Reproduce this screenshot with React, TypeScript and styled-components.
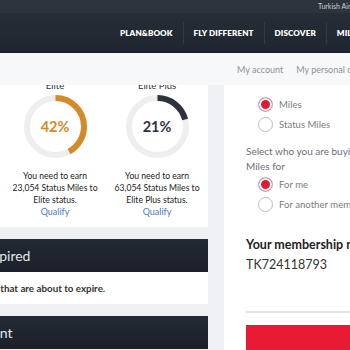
import { FC } from 'react';
import styled, { createGlobalStyle } from 'styled-components';

const GlobalStyle = createGlobalStyle`
    html, body {
        margin: 0;
        padding: 0;
        width: 350px;
        height: 350px;
        overflow: hidden;
        background: #eef0f3;
        font-family: Lato, "Noto Sans", Arial, sans-serif;
    }
`;

const Page = styled.div`
    width: 350px;
    height: 350px;
    display: flex;
    flex-direction: column;
    overflow: hidden;
`;

const TopStrip = styled.div`
    height: 13px;
    background: #2d343e;
    padding-left: 318px;
    color: #c9ced6;
    font-size: 7px;
    line-height: 12px;
    white-space: nowrap;
    overflow: hidden;
`;

const Nav = styled.nav`
    height: 39px;
    background: linear-gradient(#262d37, #20262f);
    display: flex;
    align-items: center;
    padding-left: 110px;
    white-space: nowrap;
    overflow: hidden;
    border-bottom: 1px solid #1a1f27;
`;

const NavItem = styled.a`
    color: #ffffff;
    font-weight: 800;
    font-size: 8.1px;
    letter-spacing: 0.1px;
    padding: 0 10px;
    line-height: 22px;
    border-right: 1px solid #333b46;
    &:last-child { border-right: none; }
`;

const Crumbs = styled.div`
    height: 32px;
    background: #f7f8f9;
    display: flex;
    align-items: center;
    gap: 13px;
    padding-left: 237px;
    white-space: nowrap;
    overflow: hidden;
    position: relative;
    z-index: 2;
`;

const Crumb = styled.span`
    color: #8f9297;
    font-size: 9px;
`;

const Main = styled.main`
    flex: 1;
    display: flex;
    gap: 16px;
    overflow: hidden;
`;

const LeftCol = styled.div`
    width: 208px;
    flex-shrink: 0;
    margin-top: -5px;
    display: flex;
    flex-direction: column;
    gap: 12px;
`;

const Card = styled.section`
    background: #ffffff;
    display: flex;
    padding: 0 0 9px 4px;
`;

const Stat = styled.div`
    width: 102px;
    display: flex;
    flex-direction: column;
    align-items: center;
    text-align: center;
`;

const StatLabel = styled.div`
    font-size: 9.5px;
    line-height: 12px;
    color: #333;
`;

const DonutWrap = styled.div`
    position: relative;
    width: 63px;
    height: 63px;
    margin: 3px 0 12px;
`;

const Percent = styled.div<{ $color: string }>`
    position: absolute;
    inset: 0;
    display: flex;
    align-items: center;
    justify-content: center;
    font-size: 14.5px;
    font-weight: 700;
    color: ${p => p.$color};
`;

const StatText = styled.div`
    font-size: 8.6px;
    line-height: 12px;
    color: #222;
`;

const Qualify = styled.a`
    font-size: 9px;
    line-height: 12px;
    color: #4a7bbf;
`;

const DarkHead = styled.div`
    height: 33px;
    background: linear-gradient(#232a34, #1b2029);
    display: flex;
    align-items: center;
    color: #e4e6ea;
    font-size: 14px;
    white-space: nowrap;
    overflow: hidden;
`;

const Shifted = styled.span<{ $shift: number }>`
    margin-left: ${p => -p.$shift}px;
`;

const WhiteRow = styled.div`
    height: 32px;
    background: #ffffff;
    display: flex;
    align-items: center;
    font-size: 9.8px;
    font-weight: 700;
    color: #333;
    white-space: nowrap;
    overflow: hidden;
`;

const RightCol = styled.div`
    flex: 1;
    background: #ffffff;
    padding: 9px 0 0 22px;
    white-space: nowrap;
    overflow: hidden;
`;

const RadioRow = styled.label`
    height: 20px;
    display: flex;
    align-items: center;
    gap: 6px;
    padding-left: 12px;
    font-size: 9.6px;
    color: #7a7d82;
`;

const RadioDot = styled.span<{ $on?: boolean }>`
    width: 13px;
    height: 13px;
    border-radius: 50%;
    border: 1px solid #b9bcc1;
    background: ${p => (p.$on ? '#e31837' : '#ffffff')};
    box-shadow: ${p => (p.$on ? 'inset 0 0 0 2px #ffffff' : 'none')};
    flex-shrink: 0;
`;

const Question = styled.div`
    margin-top: 10px;
    font-size: 10px;
    line-height: 15px;
    color: #6d7075;
`;

const MemberTitle = styled.div`
    margin-top: 22px;
    font-size: 12.5px;
    font-weight: 700;
    line-height: 18px;
    color: #222;
`;

const MemberNo = styled.div`
    margin-top: 2px;
    font-size: 12.5px;
    line-height: 18px;
    color: #333;
`;

const Divider = styled.hr`
    margin: 37px 0 0;
    border: none;
    border-top: 2px solid #e2e3e5;
`;

const RedButton = styled.button`
    display: block;
    margin-top: 12px;
    width: 120px;
    height: 40px;
    border: none;
    background: #e81932;
`;

const Donut: FC<{ pct: number; color: string }> = ({ pct, color }) => {
    const r = 28.5;
    const c = 2 * Math.PI * r;
    return (
        <DonutWrap>
            <svg width="63" height="63" viewBox="0 0 63 63">
                <circle cx="31.5" cy="31.5" r={r} fill="none" stroke="#eeeeee" strokeWidth="6" />
                <circle
                    cx="31.5" cy="31.5" r={r} fill="none" stroke={color} strokeWidth="6"
                    strokeDasharray={`${(c * pct) / 100} ${c}`}
                    transform="rotate(-90 31.5 31.5)"
                />
            </svg>
            <Percent $color={color}>{pct}%</Percent>
        </DonutWrap>
    );
};

const stats = [
    { label: 'Elite', pct: 42, color: '#d48a27', miles: '23,054', target: 'Elite status.' },
    { label: 'Elite Plus', pct: 21, color: '#2d333d', miles: '63,054', target: 'Elite Plus status.' },
];

const App: FC = () => (
    <Page>
        <GlobalStyle />
        <TopStrip>Turkish Airlines</TopStrip>
        <Nav>
            <NavItem>PLAN&amp;BOOK</NavItem>
            <NavItem>FLY DIFFERENT</NavItem>
            <NavItem>DISCOVER</NavItem>
            <NavItem>MILES&amp;SMILES</NavItem>
        </Nav>
        <Crumbs>
            <Crumb>My account</Crumb>
            <Crumb>My personal details</Crumb>
        </Crumbs>
        <Main>
            <LeftCol>
                <Card>
                    {stats.map(s => (
                        <Stat key={s.label}>
                            <StatLabel>{s.label}</StatLabel>
                            <Donut pct={s.pct} color={s.color} />
                            <StatText>You need to earn</StatText>
                            <StatText>{s.miles} Status Miles to</StatText>
                            <StatText>{s.target}</StatText>
                            <Qualify>Qualify</Qualify>
                        </Stat>
                    ))}
                </Card>
                <div>
                    <DarkHead><Shifted $shift={87}>Miles to be expired</Shifted></DarkHead>
                    <WhiteRow><Shifted $shift={72}>View your Miles that are about to expire.</Shifted></WhiteRow>
                </div>
                <DarkHead><Shifted $shift={104}>Account statement</Shifted></DarkHead>
            </LeftCol>
            <RightCol>
                <RadioRow><RadioDot $on />Miles</RadioRow>
                <RadioRow><RadioDot />Status Miles</RadioRow>
                <Question>Select who you are buying<br />Miles for</Question>
                <RadioRow><RadioDot $on />For me</RadioRow>
                <RadioRow><RadioDot />For another member</RadioRow>
                <MemberTitle>Your membership number</MemberTitle>
                <MemberNo>TK724118793</MemberNo>
                <Divider />
                <RedButton />
            </RightCol>
        </Main>
    </Page>
);

export default App;
